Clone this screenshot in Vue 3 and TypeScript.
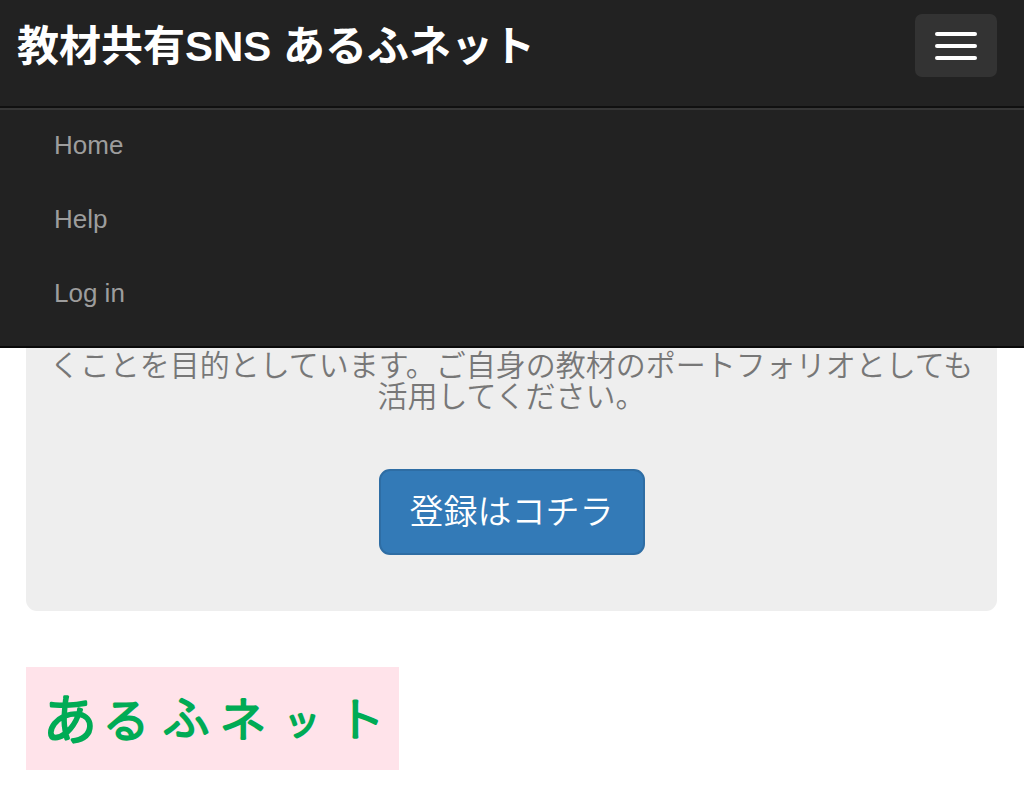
<script setup lang="ts">
import { ref } from 'vue'

interface NavLink {
  label: string
  href: string
}

const links: NavLink[] = [
  { label: 'Home', href: '#home' },
  { label: 'Help', href: '#help' },
  { label: 'Log in', href: '#login' },
]

const open = ref(true)
</script>

<template>
  <div class="page">
    <header class="navbar">
      <div class="bar">
        <a class="brand" href="#home">教材共有SNS あるふネット</a>
        <button
          class="toggle"
          type="button"
          aria-label="Toggle navigation"
          aria-controls="menu"
          :aria-expanded="open"
          @click="open = !open"
        >
          <span class="line"></span>
          <span class="line"></span>
          <span class="line"></span>
        </button>
      </div>
      <nav v-if="open" id="menu" class="menu">
        <ul class="links">
          <li v-for="link in links" :key="link.label">
            <a class="link" :href="link.href">{{ link.label }}</a>
          </li>
        </ul>
      </nav>
    </header>

    <main class="content">
      <section class="jumbotron">
        <p class="lead">くことを目的としています。ご自身の教材のポートフォリオとしても活用してください。</p>
        <a class="signup" href="#signup">登録はコチラ</a>
      </section>

      <a class="logo" href="#home">
        <svg class="logo-art" viewBox="0 0 373 103" role="img" aria-label="あるふネット">
          <text class="logo-text">
            <tspan class="large" x="17" y="73">あ</tspan>
            <tspan class="medium" x="77" y="70">る</tspan>
            <tspan class="medium" x="137" y="67">ふ</tspan>
            <tspan class="medium" x="194" y="69">ネ</tspan>
            <tspan class="small" x="258" y="68">ッ</tspan>
            <tspan class="medium" x="312" y="69">ト</tspan>
          </text>
        </svg>
      </a>
    </main>
  </div>
</template>

<style>
body {
  margin: 0;
  background: #fff;
}
</style>

<style scoped>
.page {
  font-family: "Liberation Sans", "Noto Sans CJK JP", sans-serif;
}

.navbar {
  background: #222;
  border-bottom: 2px solid #090909;
}

.bar {
  display: flex;
  align-items: flex-start;
  justify-content: space-between;
  padding: 14px 27px 26px 17px;
}

.brand {
  color: #fff;
  font-size: 42px;
  font-weight: 700;
  line-height: 66px;
  text-decoration: none;
}

.toggle {
  display: flex;
  flex-direction: column;
  justify-content: center;
  gap: 8px;
  height: 63px;
  padding: 0 20px;
  border: 0;
  border-radius: 7px;
  background: #333;
  cursor: pointer;
}

.line {
  width: 42px;
  height: 4px;
  border-radius: 2px;
  background: #fff;
}

.menu {
  padding: 0 54px 18px;
  border-top: 2px solid #101010;
  box-shadow: inset 0 2px 0 #363636;
}

.links {
  display: flex;
  flex-direction: column;
  gap: 4px;
  margin: 0;
  padding: 2px 0 0;
  list-style: none;
}

.link {
  display: block;
  color: #9d9d9d;
  font-size: 26px;
  line-height: 70px;
  text-decoration: none;
}

.content {
  padding: 0 27px 40px 26px;
}

.jumbotron {
  display: flex;
  flex-direction: column;
  align-items: center;
  padding: 2px 16px 56px;
  border-radius: 0 0 11px 11px;
  background: #eee;
}

.lead {
  margin: 0 0 57px;
  color: #777;
  font-size: 30px;
  font-weight: 350;
  line-height: 31px;
  text-align: center;
}

.signup {
  padding: 0 29px;
  border: 2px solid #2e6da4;
  border-radius: 11px;
  background: #337ab7;
  color: #fff;
  font-size: 34px;
  font-weight: 350;
  line-height: 82px;
  text-decoration: none;
}

.logo {
  display: block;
  width: 373px;
  max-width: 100%;
  margin-top: 56px;
  background: #ffe3ea;
}

.logo-art {
  display: block;
  width: 100%;
}

.logo-text {
  fill: #00ab55;
  stroke: #00ab55;
  stroke-width: 3px;
  stroke-linejoin: round;
  font-weight: 300;
}

.large {
  font-size: 54px;
}

.medium {
  font-size: 46px;
}

.small {
  font-size: 36px;
}
</style>
